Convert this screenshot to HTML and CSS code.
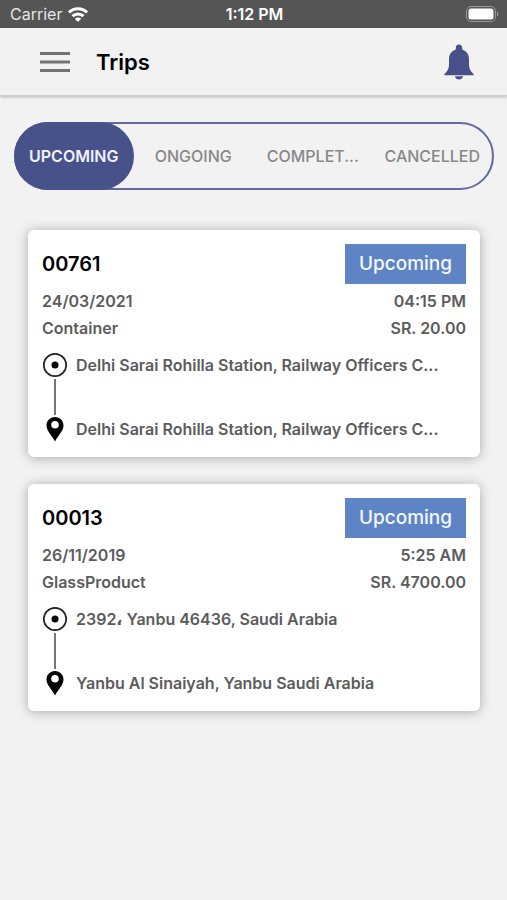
FILE: index.html
```html
<!DOCTYPE html>
<html lang="en">
<head>
    <meta charset="UTF-8">
    <meta name="viewport" content="width=device-width, initial-scale=1.0">
    <title>Trips</title>
    <link rel="stylesheet" href="styles.css">
</head>
<body>

    <div class="status-bar">
        <div class="carrier">
            <span>Carrier</span>
            <svg width="20" height="15" viewBox="0 0 20 15" fill="none" stroke="#fff" stroke-width="3">
                <path d="M1 5.4a12.8 12.8 0 0 1 18 0"/>
                <path d="M4.5 9.2a7.9 7.9 0 0 1 11 0"/>
                <path d="M10 15 6.8 11.7a4.6 4.6 0 0 1 6.4 0z" fill="#fff" stroke="none"/>
            </svg>
        </div>
        <span class="clock">1:12 PM</span>
        <div class="battery">
            <svg width="33" height="16" viewBox="0 0 33 16">
                <rect x="0.5" y="0.5" width="29" height="15" rx="4.5" fill="none" stroke="#999"/>
                <rect x="2.5" y="2.5" width="25" height="11" rx="2.5" fill="#fff"/>
                <path d="M31 5.5c2 1 2 4 0 5z" fill="#999"/>
            </svg>
        </div>
    </div>

    <header class="app-bar">
        <button class="icon-button" aria-label="Menu">
            <svg width="30" height="20" viewBox="0 0 30 20" fill="#737373">
                <rect width="30" height="3"/>
                <rect y="8.5" width="30" height="3"/>
                <rect y="17" width="30" height="3"/>
            </svg>
        </button>
        <h1>Trips</h1>
        <button class="icon-button" aria-label="Notifications">
            <svg width="30" height="36" viewBox="0 0 30 36" fill="#48508a">
                <path d="M15 0.5c-2 0-3.2 1.4-3.2 3.4v1.5C7.5 6.8 5 10.4 5 15v5.5c0 4-1.4 6.7-4.6 9.5v1.3h29.2V30c-3.2-2.8-4.6-5.5-4.6-9.5V15c0-4.6-2.5-8.2-6.8-9.6V3.9c0-2-1.2-3.4-3.2-3.4z"/>
                <path d="M10.8 32.3h8.4c-.6 2-2.2 3.3-4.2 3.3s-3.6-1.3-4.2-3.3z"/>
            </svg>
        </button>
    </header>

    <nav class="tabs">
        <button class="tab active">UPCOMING</button>
        <button class="tab">ONGOING</button>
        <button class="tab">COMPLET...</button>
        <button class="tab">CANCELLED</button>
    </nav>

    <main class="trips">
        <article class="card">
            <div class="card-head">
                <h2>00761</h2>
                <span class="badge">Upcoming</span>
            </div>
            <div class="row"><span>24/03/2021</span><span>04:15 PM</span></div>
            <div class="row"><span>Container</span><span>SR. 20.00</span></div>
            <div class="route">
                <div class="stop">
                    <svg width="26" height="26" viewBox="0 0 26 26">
                        <circle cx="13" cy="13" r="11.2" fill="none" stroke="#222" stroke-width="1.7"/>
                        <circle cx="13" cy="13" r="3.5" fill="#000"/>
                    </svg>
                    <span>Delhi Sarai Rohilla Station, Railway Officers C...</span>
                </div>
                <div class="line"></div>
                <div class="stop">
                    <svg width="26" height="26" viewBox="0 0 26 26">
                        <path fill-rule="evenodd" d="M13 1c-4.9 0-8.5 3.7-8.5 8.4 0 5.8 5.5 9.6 8.5 16.1 3-6.5 8.5-10.3 8.5-16.1 0-4.7-3.6-8.4-8.5-8.4zm0 3.9a3.8 3.8 0 1 1 0 7.6 3.8 3.8 0 0 1 0-7.6z"/>
                    </svg>
                    <span>Delhi Sarai Rohilla Station, Railway Officers C...</span>
                </div>
            </div>
        </article>

        <article class="card">
            <div class="card-head">
                <h2>00013</h2>
                <span class="badge">Upcoming</span>
            </div>
            <div class="row"><span>26/11/2019</span><span>5:25 AM</span></div>
            <div class="row"><span>GlassProduct</span><span>SR. 4700.00</span></div>
            <div class="route">
                <div class="stop">
                    <svg width="26" height="26" viewBox="0 0 26 26">
                        <circle cx="13" cy="13" r="11.2" fill="none" stroke="#222" stroke-width="1.7"/>
                        <circle cx="13" cy="13" r="3.5" fill="#000"/>
                    </svg>
                    <span>2392، Yanbu 46436, Saudi Arabia</span>
                </div>
                <div class="line"></div>
                <div class="stop">
                    <svg width="26" height="26" viewBox="0 0 26 26">
                        <path fill-rule="evenodd" d="M13 1c-4.9 0-8.5 3.7-8.5 8.4 0 5.8 5.5 9.6 8.5 16.1 3-6.5 8.5-10.3 8.5-16.1 0-4.7-3.6-8.4-8.5-8.4zm0 3.9a3.8 3.8 0 1 1 0 7.6 3.8 3.8 0 0 1 0-7.6z"/>
                    </svg>
                    <span>Yanbu Al Sinaiyah, Yanbu Saudi Arabia</span>
                </div>
            </div>
        </article>
    </main>

</body>
</html>
```
FILE: styles.css
```css
* {
    box-sizing: border-box;
}

body {
    margin: 0;
    font-family: Inter, "DejaVu Sans", sans-serif;
    background-color: #f2f2f2;
    color: #5c5c5c;
}

button {
    font-family: inherit;
    border: none;
    background: none;
    padding: 0;
    cursor: pointer;
}

svg {
    display: block;
    flex-shrink: 0;
}

h1, h2 {
    margin: 0;
    color: #000;
    font-weight: 600;
}

.status-bar {
    display: grid;
    grid-template-columns: 1fr auto 1fr;
    align-items: center;
    height: 28px;
    padding: 0 8px 0 10px;
    background-color: #555;
    color: #fff;
    font-size: 16px;
}

.carrier {
    display: flex;
    align-items: center;
    gap: 6px;
    color: #e6e6e6;
}

.clock {
    font-weight: 600;
}

.battery {
    justify-self: end;
}

.app-bar {
    display: flex;
    align-items: center;
    height: 68px;
    padding: 0 33px 0 40px;
    border-bottom: 1px solid #ccc;
    box-shadow: 0 1px 3px rgba(0, 0, 0, 0.25);
}

.app-bar h1 {
    flex: 1;
    margin-left: 26px;
    font-size: 22px;
}

.tabs {
    display: flex;
    height: 68px;
    margin: 26px 13px 40px 14px;
    border: 2px solid #6469a3;
    border-radius: 34px;
}

.tab {
    flex: 1;
    min-width: 0;
    color: #888;
    font-size: 16px;
    font-weight: 500;
    white-space: nowrap;
}

.tab.active {
    margin: -2px 0 -2px -2px;
    border-radius: 34px;
    background-color: #48528a;
    color: #f2f2ff;
    font-weight: 600;
}

.trips {
    display: flex;
    flex-direction: column;
    gap: 27px;
    padding: 0 27px 27px 28px;
}

.card {
    padding: 14px 14px 15px;
    border-radius: 6px;
    background-color: #fff;
    box-shadow: 0 1px 12px rgba(0, 0, 0, 0.3);
    font-size: 16px;
    font-weight: 600;
}

.card-head {
    display: flex;
    justify-content: space-between;
    align-items: center;
    margin-bottom: 4px;
}

.card-head h2 {
    font-size: 20px;
}

.badge {
    padding: 0 14px;
    background-color: #5e84c5;
    color: #f4f8ff;
    font-size: 19px;
    font-weight: 500;
    line-height: 40px;
}

.row {
    display: flex;
    justify-content: space-between;
    line-height: 27px;
}

.route {
    margin-top: 10px;
}

.stop {
    display: flex;
    align-items: center;
    gap: 8px;
    height: 26px;
    white-space: nowrap;
}

.line {
    width: 2px;
    height: 36px;
    margin: 1px 12px;
    background-color: #777;
}
```
